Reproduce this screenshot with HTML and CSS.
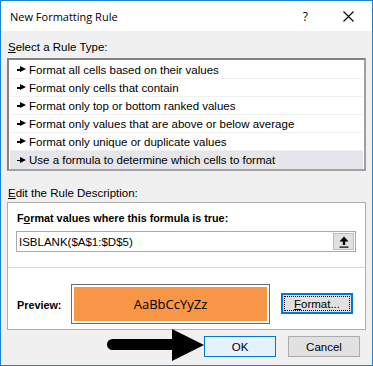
FILE: index.html
```html
<!DOCTYPE html>
<html lang="en">
<head>
    <meta charset="UTF-8">
    <meta name="viewport" content="width=device-width, initial-scale=1.0">
    <title>New Formatting Rule</title>
    <link rel="stylesheet" href="styles.css">
</head>
<body>
<div class="window">
    <div class="titlebar">
        <span class="title">New Formatting Rule</span>
        <span class="help">?</span>
        <svg class="close" width="11" height="11" viewBox="0 0 11 11">
            <path d="M0.5 0.5 L10.5 10.5 M10.5 0.5 L0.5 10.5" stroke="#000" stroke-width="1.1" fill="none"/>
        </svg>
    </div>

    <div class="content">
        <div class="label"><u>S</u>elect a Rule Type:</div>
        <ul class="rule-list">
            <li><span class="bullet"></span>Format all cells based on their values</li>
            <li><span class="bullet"></span>Format only cells that contain</li>
            <li><span class="bullet"></span>Format only top or bottom ranked values</li>
            <li><span class="bullet"></span>Format only values that are above or below average</li>
            <li><span class="bullet"></span>Format only unique or duplicate values</li>
            <li class="selected"><span class="bullet"></span>Use a formula to determine which cells to format</li>
        </ul>

        <div class="label label-edit"><u>E</u>dit the Rule Description:</div>
        <div class="desc">
            <div class="desc-top">
                <div class="desc-heading">F<u>o</u>rmat values where this formula is true:</div>
                <div class="formula">
                    <span class="formula-text">ISBLANK($A$1:$D$5)</span>
                    <span class="collapse-btn">
                        <svg width="10" height="12" viewBox="0 0 10 12">
                            <path d="M5 0.5 L9.5 5.5 L6.2 5.5 L6.2 9 L3.8 9 L3.8 5.5 L0.5 5.5 Z" fill="#000"/>
                            <rect x="0.5" y="10.5" width="9" height="1.2" fill="#000"/>
                        </svg>
                    </span>
                </div>
            </div>
            <div class="desc-bottom">
                <span class="preview-label">Preview:</span>
                <div class="preview-box">
                    <div class="preview-fill">AaBbCcYyZz</div>
                </div>
                <button class="btn btn-format"><span class="focus-ring"><u>F</u>ormat...</span></button>
            </div>
        </div>

        <div class="actions">
            <button class="btn btn-ok">OK</button>
            <button class="btn">Cancel</button>
        </div>
    </div>

    <!-- annotation arrow drawn over the dialog -->
    <svg class="pointer" width="120" height="40" viewBox="100 325 120 40">
        <rect x="107" y="339" width="76" height="11" rx="5.5" fill="#000"/>
        <path d="M172 329 L204 345 L172 361 Z" fill="#000"/>
    </svg>
</div>
</body>
</html>
```

FILE: styles.css
```css
* {
    box-sizing: border-box;
}

body {
    margin: 0;
    font-family: "Liberation Sans", Arial, sans-serif;
    font-size: 11.5px;
    color: #000;
}

.window {
    position: relative;
    width: 373px;
    height: 366px;
    border: 1px solid #1883d7;
    background-color: #f0f0f0;
}

.titlebar {
    display: flex;
    align-items: center;
    height: 30px;
    padding: 0 0 0 9px;
    background-color: #fff;
}

.title {
    flex: 1;
    font-family: "Open Sans", sans-serif;
    font-size: 11px;
}

.help {
    font-family: "Open Sans", sans-serif;
    font-size: 12px;
    margin-right: 35px;
}

.close {
    margin-right: 18px;
}

.content {
    padding: 9px 6px 0 6px;
}

.label {
    height: 14px;
    line-height: 14px;
    padding-left: 1px;
    margin-bottom: 4px;
}

.label-edit {
    margin-top: 15px;
    margin-bottom: 2px;
}

.rule-list {
    list-style: none;
    margin: 0;
    padding: 1px 1px 0 1px;
    height: 113px;
    background-color: #fff;
    border: 2px solid #828282;
    border-right-color: #a0a0a0;
    border-bottom-color: #a0a0a0;
}

.rule-list li {
    display: flex;
    align-items: center;
    height: 18px;
    padding-left: 7px;
    border-bottom: 1px solid #f0f0f0;
}

.rule-list li.selected {
    background-color: #e5e5ea;
    border-bottom: none;
}

.bullet {
    position: relative;
    width: 9px;
    height: 7px;
    margin-right: 3px;
}

.bullet::before {
    content: "";
    position: absolute;
    left: 0;
    top: 3px;
    width: 5px;
    height: 1.5px;
    background-color: #000;
}

.bullet::after {
    content: "";
    position: absolute;
    left: 3px;
    top: 0;
    border-left: 6px solid #000;
    border-top: 3.5px solid transparent;
    border-bottom: 3.5px solid transparent;
}

.desc {
    height: 128px;
    background-color: #fff;
    border: 1px solid #adadad;
}

.desc-top {
    height: 65px;
    padding: 8px 9px 0 8px;
    border-bottom: 1px solid #d9d9d9;
}

.desc-heading {
    height: 14px;
    line-height: 14px;
    padding-left: 1px;
    font-weight: bold;
    font-size: 10.8px;
    margin-bottom: 6px;
}

.formula {
    display: flex;
    align-items: center;
    height: 21px;
    border: 1px solid #a9a9a9;
    padding: 0 1px 0 2px;
}

.formula-text {
    flex: 1;
}

.collapse-btn {
    display: flex;
    align-items: center;
    justify-content: center;
    width: 21px;
    height: 17px;
    background-color: #e1e1e1;
    border: 1px solid #bcbcbc;
}

.desc-bottom {
    display: flex;
    align-items: center;
    height: 61px;
    padding: 10px 0 0 9px;
}

.preview-label {
    width: 54px;
    font-weight: bold;
    font-size: 10.8px;
    padding-top: 3px;
}

.preview-box {
    width: 199px;
    height: 40px;
    padding: 2px;
    border: 1px solid #6d6d6d;
    background-color: #fff;
}

.preview-fill {
    display: flex;
    align-items: center;
    justify-content: center;
    height: 100%;
    background-color: #f79646;
    font-family: "Open Sans", sans-serif;
    font-size: 13px;
}

.btn {
    width: 72px;
    height: 21px;
    padding: 0;
    font-family: "Liberation Sans", Arial, sans-serif;
    font-size: 11.5px;
    color: #000;
    background-color: #e1e1e1;
    border: 1px solid #adadad;
}

.btn-format {
    margin-left: 11px;
    border: 2px solid #0078d7;
    padding: 1px;
}

.focus-ring {
    display: flex;
    align-items: center;
    justify-content: center;
    height: 100%;
    border: 1px dotted #000;
}

.actions {
    display: flex;
    justify-content: flex-end;
    gap: 12px;
    margin-top: 6px;
    padding-right: 6px;
}

.btn-ok {
    background-color: #e5f1fb;
    border-color: #0078d7;
}

.pointer {
    position: absolute;
    left: 99px;
    top: 324px;
}
```
